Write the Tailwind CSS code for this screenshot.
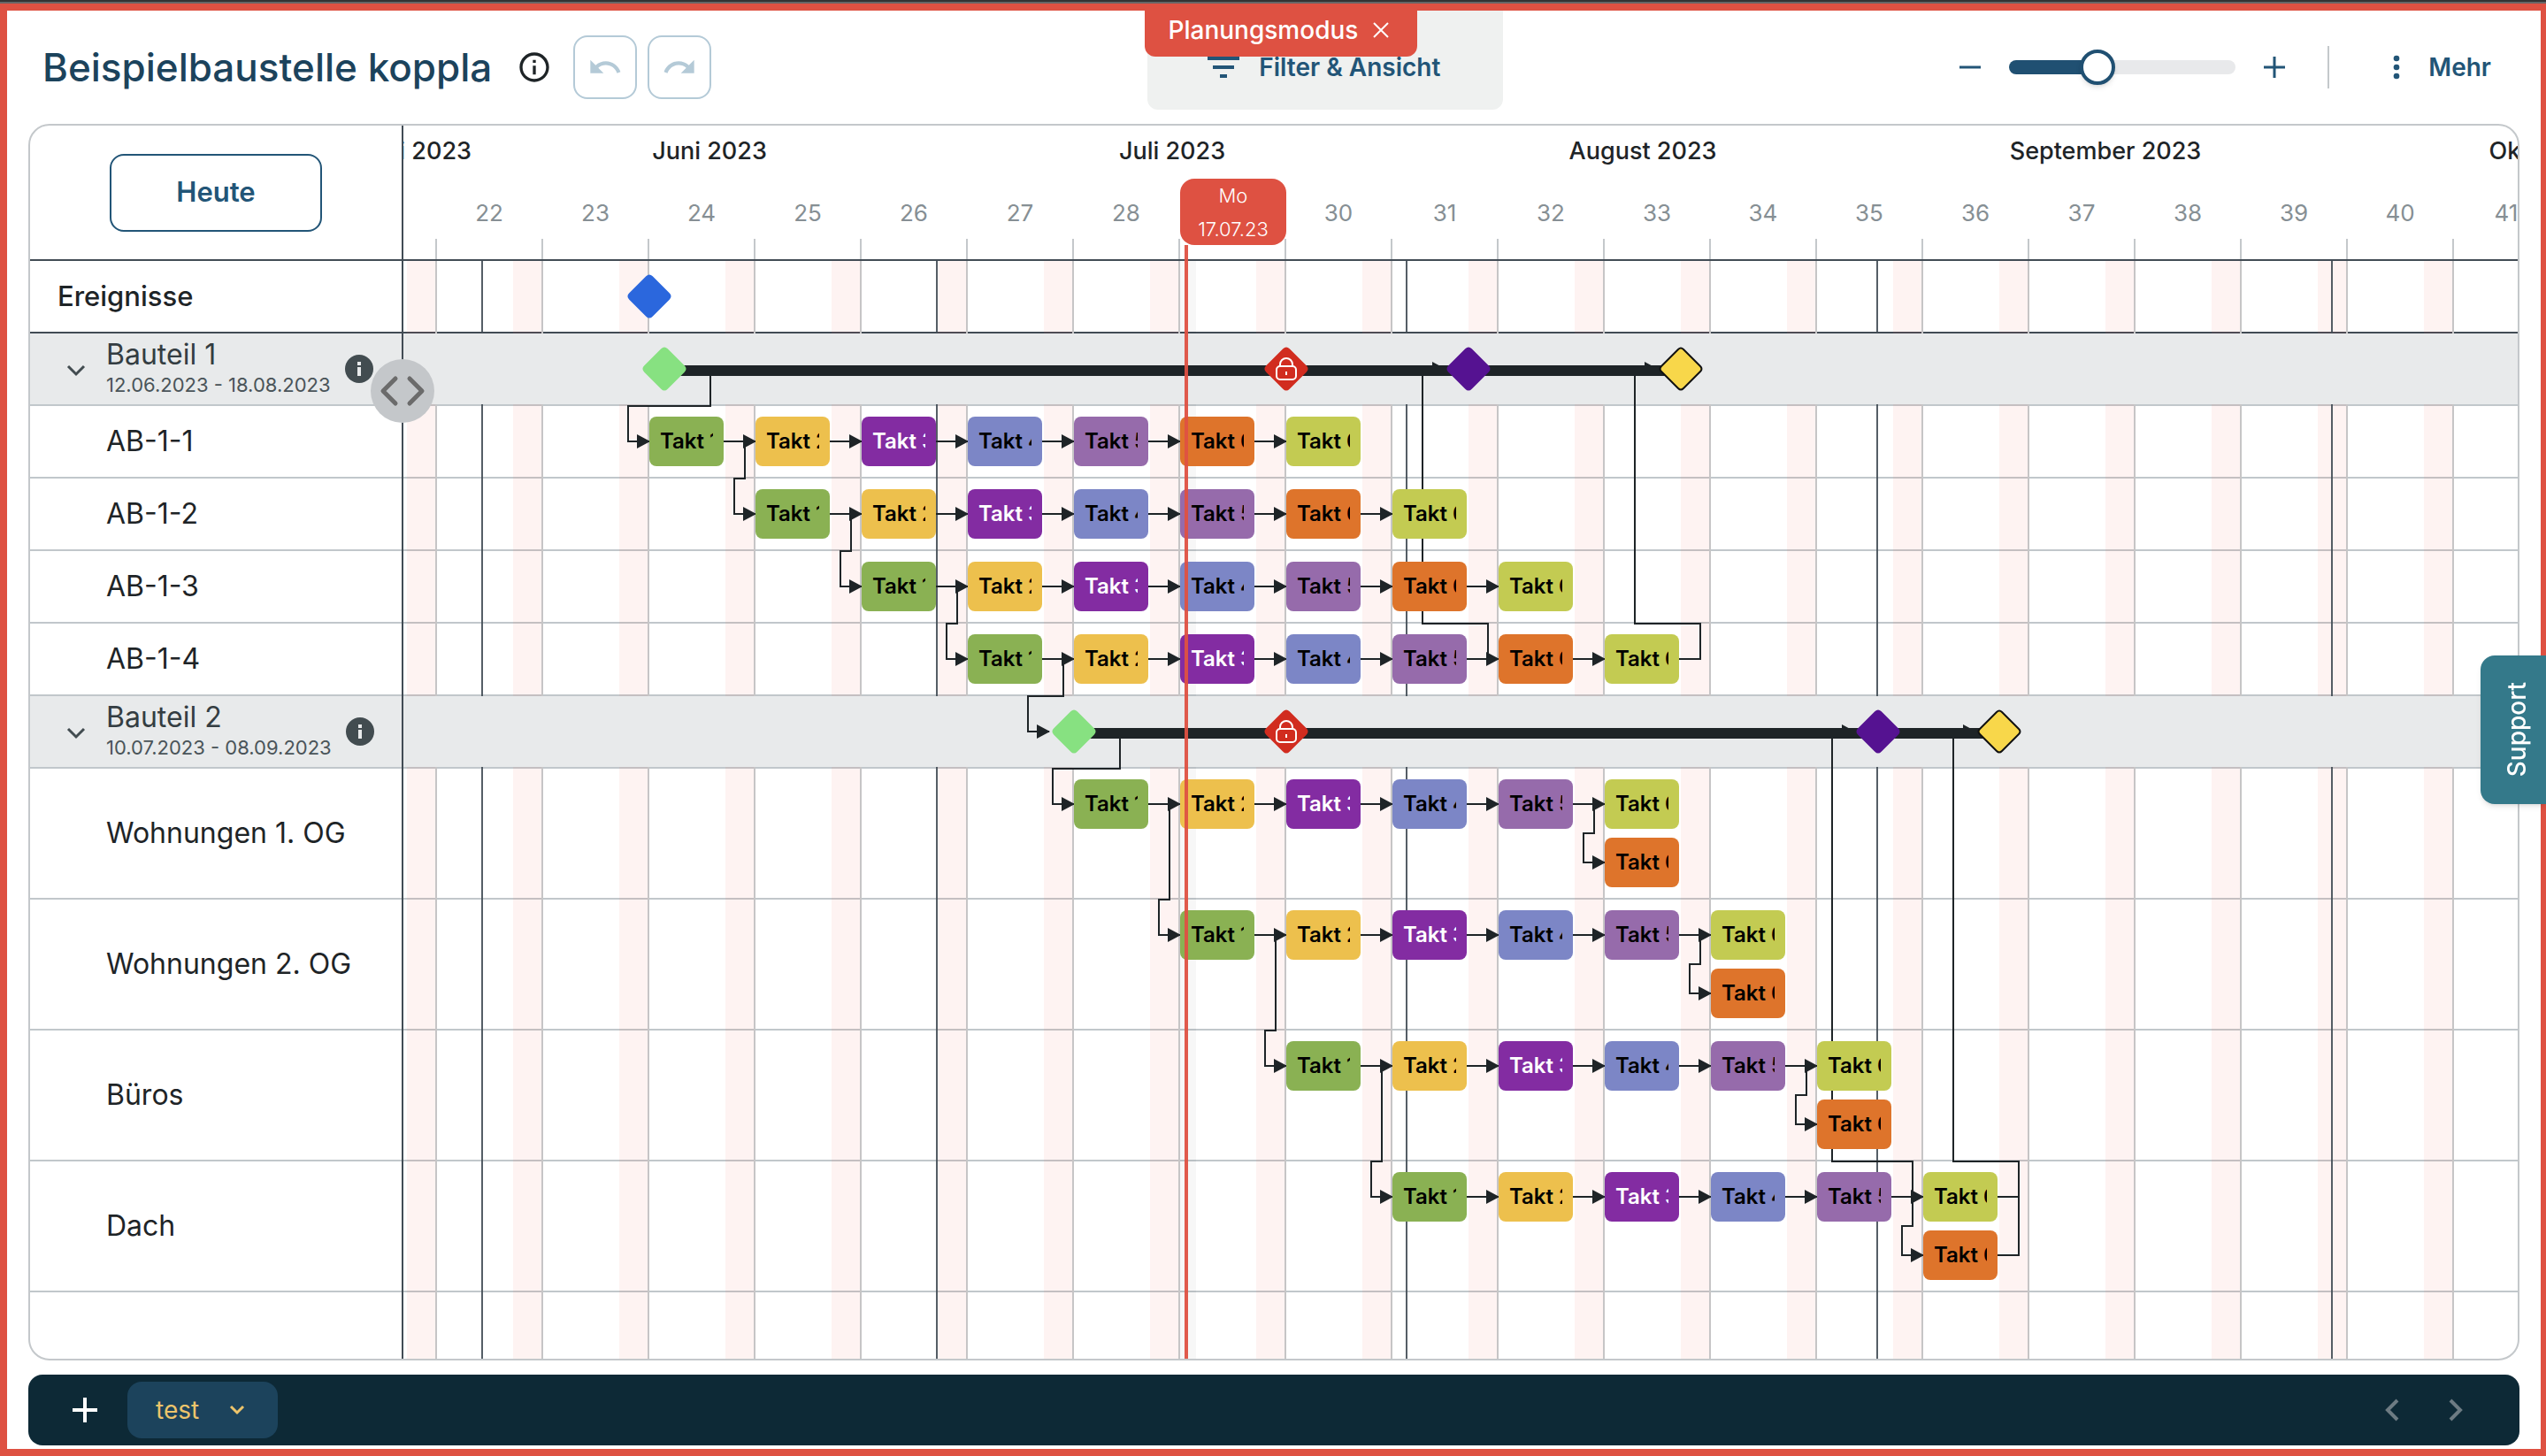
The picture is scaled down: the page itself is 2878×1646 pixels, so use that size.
<!DOCTYPE html>
<html lang="de">
<head>
    <meta charset="UTF-8">
    <meta name="viewport" content="width=device-width, initial-scale=1.0">
    <title>Beispielbaustelle koppla</title>
    <script src="https://cdn.jsdelivr.net/npm/@tailwindcss/browser@4"></script>
</head>
<body class="min-h-screen flex flex-col bg-white font-[Inter,sans-serif] text-[#1e2427]">
    <div class="h-1 bg-[#333333] border-b-2 border-[#666666]"></div>
    <main class="relative grow flex flex-col border-8 border-r-[6px] border-[#de5142] px-6 pb-1">
        <header class="h-32 -mx-6 flex items-center text-[28px] font-semibold text-[#225577]">
            <div class="w-[45%] shrink-0 flex items-center pl-10">
                <h1 class="text-[44px] font-medium text-[#1c435c]">Beispielbaustelle koppla</h1>
                <button aria-label="Info" class="ml-7 mr-6">
                    <svg class="size-10" viewBox="0 0 24 24" fill="#1e2427"><path d="M11 7h2v2h-2zm0 4h2v6h-2zm1-9C6.48 2 2 6.48 2 12s4.480 10 10 10 10-4.480 10-10S17.520 2 12 2zm0 18c-4.410 0-8-3.590-8-8s3.590-8 8-8 8 3.590 8 8-3.590 8-8 8z"/></svg>
                </button>
                <button aria-label="Rückgängig" class="size-[72px] mr-3 flex items-center justify-center rounded-2xl border-2 border-[#b4cad7]">
                    <svg class="size-10" viewBox="0 0 24 24" fill="#b4cad7"><path d="M12.5 8c-2.650 0-5.050.990-6.900 2.600L2 7v9h9l-3.620-3.620c1.390-1.160 3.160-1.880 5.120-1.880 3.540 0 6.550 2.310 7.600 5.500l2.370-.780C21.080 11.030 17.150 8 12.500 8z"/></svg>
                </button>
                <button aria-label="Wiederholen" class="size-[72px] flex items-center justify-center rounded-2xl border-2 border-[#b4cad7]">
                    <svg class="size-10" viewBox="0 0 24 24" fill="#b4cad7"><path d="M18.400 10.600C16.550 8.990 14.150 8 11.500 8c-4.650 0-8.580 3.030-9.960 7.220L3.900 16c1.050-3.190 4.050-5.500 7.600-5.500 1.950 0 3.730.720 5.120 1.880L13 16h9V7l-3.600 3.600z"/></svg>
                </button>
            </div>
            <button class="h-28 w-[402px] self-start flex items-center justify-center gap-4 pt-4 pr-2 rounded-b-xl bg-[#eff1f0]">
                <svg class="size-12" viewBox="0 0 24 24" fill="currentColor"><path d="M10 18h4v-2h-4v2zM3 6v2h18V6H3zm3 7h12v-2H6v2z"/></svg>
                Filter &amp; Ansicht
            </button>
            <div class="ml-auto flex items-center pr-14">
                <button aria-label="Verkleinern"><svg class="size-10" viewBox="0 0 40 40" fill="none" stroke="currentColor" stroke-width="3"><path d="M8 20h24"/></svg></button>
                <input type="range" min="0" max="100" value="37" aria-label="Zoom" class="w-64 h-4 mx-6 rounded-full appearance-none bg-[linear-gradient(to_right,#205072_39%,#e8e9eb_39%)] [&::-webkit-slider-thumb]:appearance-none [&::-webkit-slider-thumb]:size-10 [&::-webkit-slider-thumb]:rounded-full [&::-webkit-slider-thumb]:bg-white [&::-webkit-slider-thumb]:border-4 [&::-webkit-slider-thumb]:border-[#205072] [&::-webkit-slider-thumb]:shadow-md">
                <button aria-label="Vergrößern"><svg class="size-10" viewBox="0 0 40 40" fill="none" stroke="currentColor" stroke-width="3"><path d="M8 20h24M20 8v24"/></svg></button>
                <div class="w-[2px] h-12 ml-10 mr-14 bg-[#c4c8cb]"></div>
                <button class="flex items-center gap-4">
                    <svg class="size-10" viewBox="0 0 24 24" fill="currentColor"><circle cx="12" cy="6" r="2"/><circle cx="12" cy="12" r="2"/><circle cx="12" cy="18" r="2"/></svg>
                    Mehr
                </button>
            </div>
        </header>
        <button class="absolute top-0 left-[44.9%] h-[52px] w-[308px] pb-2 flex items-center justify-center gap-3 rounded-b-xl bg-[#de5142] text-white text-[28px] font-medium">
            Planungsmodus
            <svg class="size-7" viewBox="0 0 28 28" fill="none" stroke="white" stroke-width="2"><path d="M6 6l16 16M22 6L6 22"/></svg>
        </button>

        <section class="relative grow flex rounded-3xl border-2 border-[#c4c8cb] overflow-hidden">
            <aside class="w-[422px] shrink-0 flex flex-col border-r-2 border-[#424c55]">
                <div class="h-[153px] flex items-center justify-center border-b-2 border-[#424c55]">
                    <button class="w-60 h-[88px] rounded-2xl border-2 border-[#225577] text-[31px] font-semibold text-[#225577]">Heute</button>
                </div>
                <div id="labels"></div>
            </aside>
            <div class="relative grow overflow-hidden flex flex-col">
                <div class="h-[153px] border-b-2 border-[#424c55]">
                    <div id="months" class="flex h-14 pt-[2px] items-center text-[27px] font-medium"></div>
                    <div id="weeks" class="flex h-[72px] pt-3 items-center text-[26px] text-[#868f94]">
                        <div class="w-[38px] shrink-0"></div>
                    </div>
                    <div id="ticks" class="flex h-[23px]">
                        <div class="w-[38px] shrink-0 border-r-2 border-[#c4c8cb]"></div>
                    </div>
                </div>
                <div id="grid" class="relative grow"></div>
                <!-- today marker -->
                <div class="absolute z-30 top-[135px] bottom-0 left-[883px] w-1 bg-[#de5142]/95"></div>
                <div class="absolute z-30 top-[60px] left-[878px] w-[120px] h-[75px] flex flex-col items-center justify-center rounded-2xl bg-[#de5142] text-white text-[22px] leading-[38px] font-light">
                    <span>Mo</span><span>17.07.23</span>
                </div>
            </div>
            <button aria-label="Spaltenbreite ändern" class="absolute z-40 top-[264px] left-[385px] size-[72px] flex items-center justify-center rounded-full bg-[#c4c7ca]">
                <svg class="size-[72px]" viewBox="0 0 72 72" fill="none" stroke="#6b6b6b" stroke-width="5" stroke-linecap="round" stroke-linejoin="round"><path d="M28 22L14 36l14 14M44 22l14 14-14 14"/></svg>
            </button>
        </section>

        <footer class="h-20 mt-4 flex items-center rounded-2xl bg-[#0d2936] px-11">
            <button aria-label="Neuer Tab" class="mr-7"><svg class="size-10" viewBox="0 0 40 40" fill="none" stroke="white" stroke-width="4"><path d="M6 20h28M20 6v28"/></svg></button>
            <button class="h-16 w-[170px] flex items-center justify-between rounded-2xl bg-[#1c435c] px-8 text-[28px] text-[#edc46b]">
                test
                <svg class="size-7" viewBox="0 0 28 28" fill="none" stroke="currentColor" stroke-width="3"><path d="M7 10l7 7 7-7"/></svg>
            </button>
            <button aria-label="Zurück" class="ml-auto mr-8"><svg class="size-10" viewBox="0 0 40 40" fill="none" stroke="#6d7b83" stroke-width="4"><path d="M26 9L15 20l11 11"/></svg></button>
            <button aria-label="Weiter" class="mr-2"><svg class="size-10" viewBox="0 0 40 40" fill="none" stroke="#6d7b83" stroke-width="4"><path d="M14 9l11 11-11 11"/></svg></button>
        </footer>
    </main>
    <button class="fixed z-50 right-0 top-[45%] w-[74px] h-[168px] flex items-center justify-center rounded-l-2xl bg-[#34798a] pl-2 text-white text-[28px] font-medium shadow-md">
        <span class="[writing-mode:vertical-rl] rotate-180">Support</span>
    </button>

<script>
const WEEK = 120;
const START = 278; // Monday of week 24
const LINE = '#1e2427';

const months = [['Mai 2023', 89], ['Juni 2023', 514], ['Juli 2023', 532], ['August 2023', 532], ['September 2023', 514], ['Oktober 2023', 532]];
const monthLines = [88, 602, 1133, 1665, 2179];

const takte = [
    {name: 'Takt 1', color: '#8ab153'},
    {name: 'Takt 2', color: '#edc04d'},
    {name: 'Takt 3', color: '#832ca2', text: '#ffffff'},
    {name: 'Takt 4', color: '#7c86c6'},
    {name: 'Takt 5', color: '#966bab'},
    {name: 'Takt 6', color: '#de742b'},
    {name: 'Takt 6', color: '#c3cb52'}
];

const rows = [
    {type: 'events', name: 'Ereignisse', height: 82},
    {type: 'group', name: 'Bauteil 1', dates: '12.06.2023 - 18.08.2023', height: 82, from: 295, to: 1444,
        stones: [[295, '#87e181'], [998, '#d12c1f', true], [1204, '#551291'], [1444, '#f8d74a', false, true]]},
    {name: 'AB-1-1', height: 82, start: 0},
    {name: 'AB-1-2', height: 82, start: 1},
    {name: 'AB-1-3', height: 82, start: 2},
    {name: 'AB-1-4', height: 82, start: 3},
    {type: 'group', name: 'Bauteil 2', dates: '10.07.2023 - 08.09.2023', height: 82, from: 758, to: 1804,
        stones: [[758, '#87e181'], [998, '#d12c1f', true], [1667, '#551291'], [1804, '#f8d74a', false, true]]},
    {name: 'Wohnungen 1. OG', height: 148, start: 4, stacked: true},
    {name: 'Wohnungen 2. OG', height: 148, start: 5, stacked: true},
    {name: 'Büros', height: 148, start: 6, stacked: true},
    {name: 'Dach', height: 148, start: 7, stacked: true}
];

let svg = '';
let bars = '';

function line(points, arrow = true){
    svg += `<path d="M${points.map(p => p.join(' ')).join('L')}" fill="none" stroke="${LINE}" stroke-width="2"/>`;
    if(arrow){
        const [x, y] = points[points.length - 1];
        svg += `<path d="M${x - 14} ${y - 8}L${x + 1} ${y}L${x - 14} ${y + 8}z" fill="${LINE}"/>`;
    }
}

function stone(x, y, color, locked, outlined){
    const stroke = outlined ? '#111111' : color;
    svg += `<path d="M${x - 22} ${y - 3}L${x - 3} ${y - 22}Q${x} ${y - 25} ${x + 3} ${y - 22}L${x + 22} ${y - 3}Q${x + 25} ${y} ${x + 22} ${y + 3}L${x + 3} ${y + 22}Q${x} ${y + 25} ${x - 3} ${y + 22}L${x - 22} ${y + 3}Q${x - 25} ${y} ${x - 22} ${y - 3}z" fill="${color}" stroke="${stroke}" stroke-width="2"/>`;
    if(locked){
        svg += `<g fill="none" stroke="#ffffff" stroke-width="2"><rect x="${x - 11}" y="${y - 3}" width="22" height="15" rx="4"/><path d="M${x - 7} ${y - 3}v-2a7 7 0 0 1 14 0v2M${x} ${y + 3}v4"/></g>`;
    }
}

function bar(x, y, takt){
    bars += `<button class="absolute z-20 w-[84px] h-14 px-3 rounded-lg text-left text-[24px] font-semibold" style="left:${x}px;top:${y}px;background:${takt.color};color:${takt.text || '#000000'}"><span class="block overflow-hidden whitespace-nowrap">${takt.name}</span></button>`;
}

// rows
let offset = 0;
let labels = '';
let grid = '';
for(const row of rows){
    row.top = offset;
    offset += row.height;
    if(row.type === 'events'){
        labels += `<div class="flex items-center pl-[31px] border-b-2 border-[#424c55] text-[31px] font-medium" style="height:${row.height}px">${row.name}</div>`;
        grid += `<div class="border-b-2 border-[#424c55]" style="height:${row.height}px"></div>`;
    } else if(row.type === 'group'){
        labels += `<div class="flex items-center pl-9 border-b-2 border-[#c1c7cb] bg-[#e8eaeb]" style="height:${row.height}px">
            <button aria-label="Einklappen"><svg class="size-8" viewBox="0 0 32 32" fill="none" stroke="#424c50" stroke-width="3"><path d="M7 13l9 9 9-9"/></svg></button>
            <div class="ml-[18px]">
                <div class="text-[32px] leading-9 text-[#343d42]">${row.name}</div>
                <div class="text-[22px] leading-8 text-[#4a5459]">${row.dates}</div>
            </div>
            <svg class="size-8 ml-4" viewBox="0 0 32 32"><circle cx="16" cy="16" r="16" fill="#424c50"/><path d="M14 14h4v10h-4zM14 8h4v4h-4z" fill="#e8eaeb"/></svg>
        </div>`;
        grid += `<div class="border-b-2 border-[#c1c7cb]" style="height:${row.height}px"><div class="relative z-10 h-20 bg-[#e8eaeb]"></div></div>`;
    } else {
        labels += `<div class="flex items-center pl-[86px] border-b-2 border-[#c1c7cb] text-[32px]" style="height:${row.height}px">${row.name}</div>`;
        grid += `<div class="border-b-2 border-[#c1c7cb]" style="height:${row.height}px"></div>`;
    }
}

// weekends and month borders
for(let x = 4; x < 2400; x += WEEK){
    grid += `<div class="absolute inset-y-0 w-[34px] bg-[#f05040]/7 border-r-2 border-[#c6c5c6]" style="left:${x}px"></div>`;
}
grid += `<div class="absolute inset-y-0 left-[878px] w-[18px] bg-black/3"></div>`;
for(const x of monthLines){
    grid += `<div class="absolute inset-y-0 w-[2px] bg-[#424c55]/90" style="left:${x}px"></div>`;
}

// bars and the links between them
rows.forEach((row, r) => {
    if(row.start === undefined) return;
    const x0 = START + row.start * WEEK;
    const mid = row.top + 40;
    const single = row.stacked ? takte.slice(0, 5) : takte;
    single.forEach((takt, i) => {
        bar(x0 + i * WEEK, row.top + 12, takt);
        if(i > 0) line([[x0 + i * WEEK - 36, mid], [x0 + i * WEEK, mid]]);
    });
    if(row.stacked){
        const x = x0 + 5 * WEEK;
        bar(x, row.top + 12, takte[6]);
        bar(x, row.top + 78, takte[5]);
        line([[x - 36, mid], [x, mid]]);
        line([[x - 12, mid], [x - 12, mid + 33], [x - 24, mid + 33], [x - 24, mid + 66], [x, mid + 66]]);
    }
    const next = rows[r + 1];
    if(next && next.start !== undefined){
        const x = x0 + WEEK;
        line([[x - 12, mid], [x - 12, next.top], [x - 24, next.top], [x - 24, next.top + 40], [x, next.top + 40]]);
    }
});

// links from and to the groups
line([[347, 122], [347, 164], [254, 164], [254, 204], [278, 204]]);
line([[746, 450], [746, 492], [706, 492], [706, 532], [730, 532]]);
line([[810, 532], [810, 574], [734, 574], [734, 614], [758, 614]]);
line([[1226, 450], [1226, 410], [1152, 410], [1152, 122], [1177, 122]]);
line([[1442, 450], [1466, 450], [1466, 410], [1392, 410], [1392, 122], [1417, 122]]);
line([[1706, 1058], [1706, 1018], [1615, 1018], [1615, 532], [1640, 532]]);
line([[1802, 1058], [1826, 1058], [1826, 1018], [1752, 1018], [1752, 532], [1777, 532]]);
line([[1802, 1124], [1826, 1124], [1826, 1058]], false);

stone(278, 40, '#2b67dd');
for(const row of rows.filter(r => r.type === 'group')){
    svg += `<path d="M${row.from} ${row.top + 42}H${row.to}" stroke="${LINE}" stroke-width="12"/>`;
    for(const [x, color, locked, outlined] of row.stones) stone(x, row.top + 40, color, locked, outlined);
}

grid += `<svg class="absolute z-20 inset-0 w-full h-full">${svg}</svg>${bars}`;
document.getElementById('labels').innerHTML = labels;
document.getElementById('grid').innerHTML = grid;

// header
document.getElementById('months').innerHTML = months.map(([name, w], i) =>
    `<div class="shrink-0 flex whitespace-nowrap ${i === 0 ? 'justify-end pr-3' : 'justify-center'}" style="width:${w}px">${name}</div>`).join('');
for(let w = 22; w <= 41; w++){
    document.getElementById('weeks').innerHTML += `<div class="w-[120px] pr-[2px] shrink-0 text-center">${w === 29 ? '' : w}</div>`;
    document.getElementById('ticks').innerHTML += `<div class="w-[120px] shrink-0 border-r-2 border-[#c4c8cb]"></div>`;
}
</script>
</body>
</html>
